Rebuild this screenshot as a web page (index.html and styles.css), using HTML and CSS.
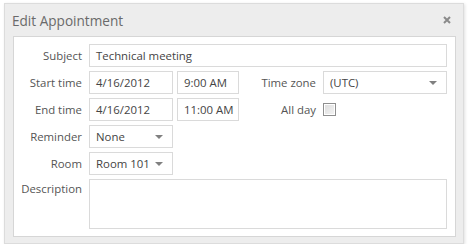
FILE: index.html
```html
<!DOCTYPE html>
<html lang="en">
<head>
    <meta charset="UTF-8">
    <title>Edit Appointment</title>
    <link rel="stylesheet" href="styles.css">
</head>
<body>
    <div class="window">
        <div class="titlebar">
            <span class="title">Edit Appointment</span>
            <svg class="close" width="8" height="8" viewBox="0 0 8 8">
                <path d="M1 1 L7 7 M7 1 L1 7" stroke="#8a8a8a" stroke-width="2"/>
            </svg>
        </div>

        <div class="content">
            <div class="form">
                <label class="lbl">Subject</label>
                <div class="field span-all">Technical meeting</div>

                <label class="lbl">Start time</label>
                <div class="field">4/16/2012</div>
                <div class="field">9:00 AM</div>
                <label class="lbl">Time zone</label>
                <div class="field select">(UTC)<span class="arrow"></span></div>

                <label class="lbl">End time</label>
                <div class="field">4/16/2012</div>
                <div class="field">11:00 AM</div>
                <label class="lbl">All day</label>
                <div class="check-cell"><span class="checkbox"></span></div>

                <label class="lbl">Reminder</label>
                <div class="field select">None<span class="arrow"></span></div>
                <div class="empty span-rest"></div>

                <label class="lbl">Room</label>
                <div class="field select">Room 101<span class="arrow"></span></div>
                <div class="empty span-rest"></div>

                <label class="lbl lbl-top">Description</label>
                <div class="field textarea span-all"></div>
            </div>
        </div>
    </div>
</body>
</html>
```

FILE: styles.css
```css
* {
    margin: 0;
    padding: 0;
    box-sizing: border-box;
}

body {
    background: #fff;
    font-family: 'Open Sans', 'Noto Sans', sans-serif;
    font-size: 11.4px;
    color: #444;
}

.window {
    margin: 3px 0 0 4px;
    width: 460px;
    height: 241px;
    background: #ededed;
    border: 1px solid #dcdcdc;
    box-shadow: 1px 1px 3px rgba(0, 0, 0, 0.12);
    padding: 0 7px 7px 8px;
}

.titlebar {
    height: 32px;
    display: flex;
    align-items: center;
    justify-content: space-between;
    margin-left: -1px;
    padding-right: 3px;
}

.title {
    font-size: 13.6px;
    color: #6a6a6a;
}

.close {
    display: block;
    margin-right: 2px;
}

.content {
    background: #fff;
    border: 1px solid #d6d6d6;
    padding: 7px 7px 7px 0;
    height: 201px;
}

.form {
    display: grid;
    grid-template-columns: 71px 84px 62px 76px 124px;
    grid-auto-rows: 23px;
    column-gap: 4px;
    row-gap: 4px;
}

.lbl {
    text-align: right;
    padding-right: 3px;
    line-height: 23px;
    color: #555;
    white-space: nowrap;
}

.lbl-top {
    line-height: 20px;
}

.field {
    border: 1px solid #dadada;
    padding: 0 6px;
    line-height: 21px;
    color: #444;
    white-space: nowrap;
    overflow: hidden;
    position: relative;
}

.span-all {
    grid-column: 2 / 6;
}

.span-rest {
    grid-column: 3 / 6;
}

.textarea {
    grid-row: span 2;
    height: 50px;
}

.select {
    padding-right: 18px;
}

.arrow {
    position: absolute;
    right: 9px;
    top: 9px;
    width: 0;
    height: 0;
    border-left: 4px solid transparent;
    border-right: 4px solid transparent;
    border-top: 4px solid #808080;
}

.check-cell {
    display: flex;
    align-items: center;
}

.checkbox {
    width: 13px;
    height: 13px;
    border: 1px solid #8f8f8f;
    background: linear-gradient(to bottom right, #dcdcdc, #f4f4f4);
    box-shadow: inset 0 0 0 1px #fff;
}
```
